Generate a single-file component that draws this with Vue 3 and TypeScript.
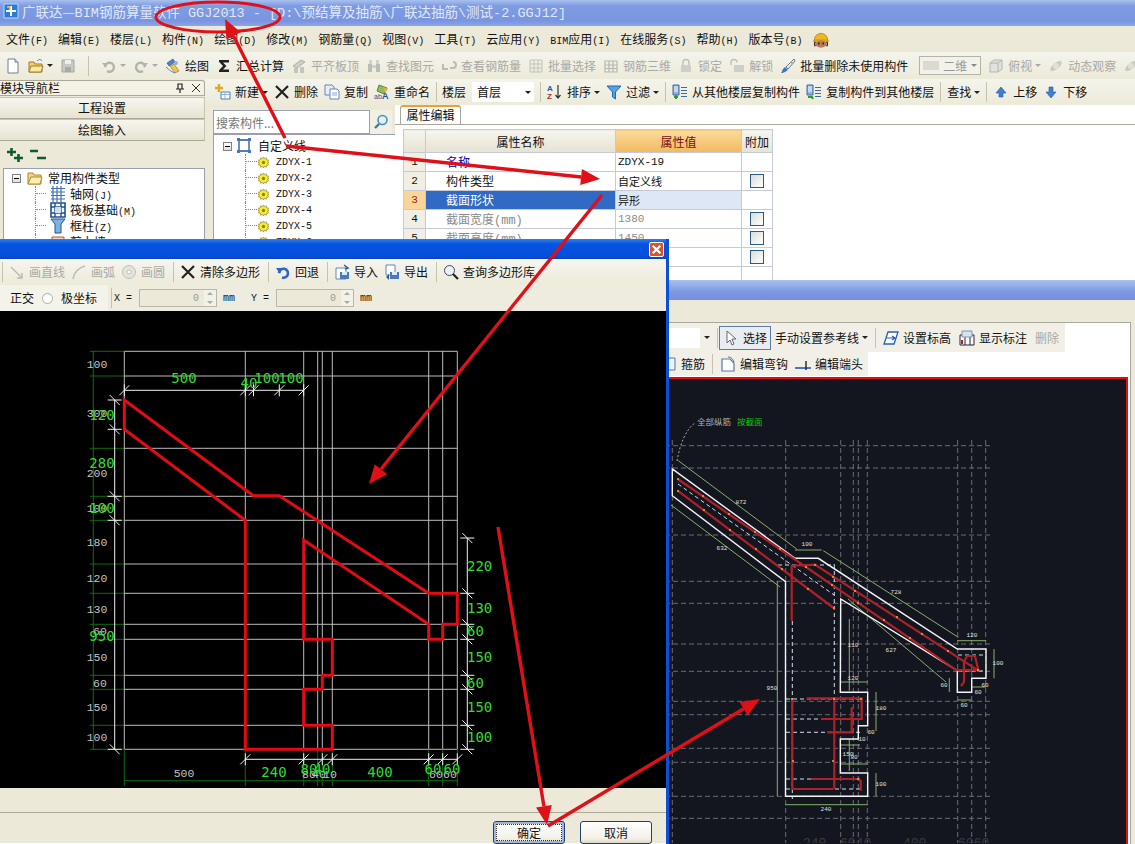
<script setup lang="ts">
interface Tool {
  icon?: string
  text?: string
  off?: boolean
  caret?: boolean
  sep?: boolean
  active?: boolean
}

const icons: Record<string, string> = {
  doc: '<path d="M3 1h7l3 3v11H3z" fill="#fff" stroke="#6d7f9a"/><path d="M10 1v3h3" fill="#dde4ef" stroke="#6d7f9a"/>',
  open: '<path d="M1 4h5l1 2h7v8H1z" fill="#f3cf6a" stroke="#a37c24"/><path d="M3 8h12l-2 6H1z" fill="#fbe9a6" stroke="#a37c24"/><path d="M9 3c2-2 4-2 5 0" fill="none" stroke="#4a7ac0"/>',
  save: '<path d="M2 2h12v12H2z" fill="#c9c9c4" stroke="#a5a5a0"/><path d="M5 2h6v4H5z" fill="#eee"/><path d="M5 9h6v5H5z" fill="#aaa"/>',
  undo: '<path d="M4 9a4.5 4.5 0 1 1 2 4" fill="none" stroke="#b4b4ae" stroke-width="2.4"/><path d="M1 5l5 0-1 5z" fill="#b4b4ae"/>',
  redo: '<path d="M12 9a4.5 4.5 0 1 0-2 4" fill="none" stroke="#b4b4ae" stroke-width="2.4"/><path d="M15 5l-5 0 1 5z" fill="#b4b4ae"/>',
  draw: '<path d="M2 5l6-4 2 3-6 4z" fill="#4d82c8" stroke="#234f8d" stroke-width=".6"/><path d="M5 8l5 7 4-2-5-7z" fill="#e9c65a" stroke="#8a6d1d" stroke-width=".6"/><path d="M1 9c3 3 6 5 9 6" fill="none" stroke="#5c88c4"/><circle cx="11" cy="5" r="2" fill="#8db3e0"/>',
  sigma: '<path d="M3 2h10v2.4H7l3.4 3.6L7 11.600h6V14H3v-1.800L7 8 3 3.800z" fill="#222"/>',
  flush: '<path d="M2 8l8-6 4 2-8 6z" fill="#cfcfca" stroke="#b0b0aa"/><path d="M3 10h4v5H3zM9 9h4v6H9z" fill="#c4c4bf"/>',
  find: '<path d="M2 6h4v8H2zM10 6h4v8h-4z" fill="#bdbdb8"/><path d="M3 2h3v4H3zM10 2h3v4h-3zM6 7h4v3H6z" fill="#d2d2cd"/>',
  hook: '<path d="M2 6v5h5M12 4a3 3 0 0 1 0 6H9" fill="none" stroke="#bbb" stroke-width="2"/>',
  batch: '<path d="M2 2h12v12H2zM2 6h12M2 10h12M6 2v12M10 2v12" fill="none" stroke="#c2c2bc"/>',
  grid3: '<path d="M2 3h12v11H2zM2 7h12M2 10.500h12M6 3v11M10 3v11" fill="none" stroke="#b7b7b1" stroke-width="1.200"/>',
  lock: '<path d="M5 7V4.500a3 3 0 0 1 6 0V7" fill="none" stroke="#bfbfb9" stroke-width="1.400"/><path d="M3 7h10v7H3z" fill="#cfcfc9"/>',
  unlock: '<path d="M2 7V4.500a3 3 0 0 1 6 0" fill="none" stroke="#bfbfb9" stroke-width="1.400"/><path d="M5 7h10v7H5z" fill="#cfcfc9"/>',
  brush: '<path d="M14 1L6 9l2 2 7-8z" fill="#f2f2f2" stroke="#5578b0"/><path d="M5 9l3 3-3 2c-2 1-3 1-4 1 1-1 1-2 2-4z" fill="#3f73c0"/><path d="M11 4l2 2" stroke="#d9a93b" stroke-width="2"/>',
  cube: '<path d="M2 5l4-3h8v9l-4 3H2z" fill="#e2e2dc" stroke="#b4b4ae"/><path d="M2 5h8v9M10 5l4-3" fill="none" stroke="#b4b4ae"/>',
  orbit: '<ellipse cx="8" cy="8" rx="7" ry="3" transform="rotate(-40 8 8)" fill="#c9c9c3"/><circle cx="8" cy="8" r="3" fill="#e0e0da"/>',
  add: '<path d="M6 8h9v7H6z" fill="#fff" stroke="#4d7fb8"/><path d="M6 10.500h9M10 8v7" stroke="#8fb0d6"/><path d="M4 0v8M0 4h8" stroke="#e2a91c" stroke-width="2.400"/>',
  cross: '<path d="M2 2l12 12M14 2L2 14" stroke="#222" stroke-width="2.200"/>',
  copy: '<path d="M1 1h7l2 2v8H1z" fill="#e8eef8" stroke="#6486b8"/><path d="M6 5h7l2 2v8H6z" fill="#fff" stroke="#6486b8"/><path d="M8 9h5M8 11h5" stroke="#8aa6cc"/>',
  rename: '<path d="M5 1l8 3-3 6-7-3z" fill="#8fb95a" stroke="#5f8a31"/><path d="M9 3l5 2-3 4" fill="#e2b24a"/><text x="0" y="15" font-size="7" fill="#284f94" font-family="Liberation Sans">ab</text><text x="8" y="15" font-size="9" font-weight="700" fill="#284f94" font-family="Liberation Sans">A</text>',
  sortaz: '<text x="0" y="7" font-size="8" font-weight="700" fill="#2a5aa8" font-family="Liberation Sans">A</text><text x="0" y="15" font-size="8" font-weight="700" fill="#b03020" font-family="Liberation Sans">Z</text><path d="M11 1v13M8.500 11l2.500 3 2.500-3" fill="none" stroke="#333" stroke-width="1.200"/>',
  filter: '<path d="M1 2h14L9.500 8v7l-3-2V8z" fill="#55a0e6" stroke="#2465a8"/>',
  fromfloor: '<path d="M1 1h6v10H1z" fill="#8bb0de" stroke="#3d6aa6"/><path d="M2 3h4M2 5h4M2 7h4" stroke="#fff"/><path d="M9 3h6v1H9zM9 6h6v1H9zM9 9h6v1H9zM9 12h6v1H9z" fill="#3d6aa6"/><path d="M4 11v4M2 13h4" stroke="#2f9a32" stroke-width="2"/>',
  tofloor: '<path d="M1 1h6v10H1z" fill="#8bb0de" stroke="#3d6aa6"/><path d="M2 3h4M2 5h4M2 7h4" stroke="#fff"/><path d="M9 3h6v1H9zM9 6h6v1H9zM9 9h6v1H9zM9 12h6v1H9z" fill="#3d6aa6"/><path d="M2 13h4l1 2" fill="none" stroke="#2f9a32" stroke-width="2"/>',
  up: '<path d="M8 3l5 6h-3v4H6V9H3z" fill="#3f7fd0" stroke="#1f5aa6" stroke-width=".6"/>',
  down: '<path d="M8 14l5-6h-3V3H6v5H3z" fill="#3f7fd0" stroke="#1f5aa6" stroke-width=".6"/>',
  line: '<path d="M2 3l11 11M13 9v5H8" fill="none" stroke="#b9b9b3" stroke-width="1.400"/>',
  arc: '<path d="M2 15C3 8 7 4 14 2" fill="none" stroke="#bdbdb7" stroke-width="1.600"/>',
  circle: '<circle cx="8" cy="8" r="6.500" fill="#e4e4de" stroke="#c0c0ba"/><circle cx="8" cy="8" r="2" fill="#fff" stroke="#c0c0ba"/>',
  back: '<path d="M4 9a4.500 4.500 0 1 1 3 4.500" fill="none" stroke="#2e66c4" stroke-width="2.600"/><path d="M1 4h6l-2 6z" fill="#2e66c4"/>',
  importfile: '<path d="M2 4h10v11H2z" fill="#fff" stroke="#6486b8"/><path d="M6 8h9v7H6z" fill="#4a79bd"/><path d="M8 8h5v3H8z" fill="#dfe9f7"/><path d="M10 1l4 3-3 1" fill="none" stroke="#35578c" stroke-width="1.400"/>',
  exportfile: '<path d="M2 1h9v10H2z" fill="#fff" stroke="#6486b8"/><path d="M6 8h9v7H6z" fill="#4a79bd"/><path d="M8 8h5v3H8z" fill="#dfe9f7"/><path d="M2 13l3-3v6z" fill="#35578c"/>',
  search: '<circle cx="6.500" cy="6.500" r="5" fill="#e9f2fb" stroke="#445"/><path d="M10 10l5 5" stroke="#222" stroke-width="2.200"/>',
  pointer: '<path d="M4 1v12l3-3 2 5 2-1-2-5h4z" fill="#fff" stroke="#667"/>',
  level: '<path d="M5 2h10l-4 12H1z" fill="#fff" stroke="#2a5fb0" stroke-width="1.300"/><path d="M3 8h9M9 6l3 2-3 2" fill="none" stroke="#2a5fb0" stroke-width="1.200"/>',
  mark: '<path d="M1 5h14v10H1z" fill="#fff" stroke="#223"/><path d="M6 5v10M11 5v10" stroke="#223"/><path d="M3 1h10v6H3z" fill="#d8e2ef" stroke="#7f92ad"/><path d="M2 10h2v4H2z" fill="#b02020"/>',
  rebarbox: '<path d="M2 2h12v12H2z" fill="#eef3fa" stroke="#4d78b4"/>',
  hookedit: '<path d="M2 3h8l4 4v8H2z" fill="#fff" stroke="#5579ad" stroke-width="1.200"/><path d="M8 1c3 0 5 2 6 5" fill="none" stroke="#5579ad"/>',
  endedit: '<path d="M0 12h16" stroke="#3a6db8" stroke-width="1.800"/><path d="M11 5v9" stroke="#223" stroke-width="1.400"/>',
  expand: '<path d="M4.500 1v8M0 5h9" stroke="#0f5a35" stroke-width="2.600"/><path d="M11.500 7v8M7 11h9" stroke="#0f5a35" stroke-width="2.600"/>',
  collapse: '<path d="M0 4h8M7 11h9" stroke="#0f5a35" stroke-width="2.400"/>',
  folder: '<path d="M1 3h5l1 2h7v9H1z" fill="#f4d57a" stroke="#ad8a30"/><path d="M4 7h11l-2 7H1z" fill="#fbedb8" stroke="#ad8a30"/>',
  axis: '<path d="M1 2.500h14M1 6h14M1 9.500h14M1 13h14M3 0v16M7 0v16M11 0v16" stroke="#3c6fb5" stroke-width="1.200"/>',
  raft: '<path d="M1 1h14v14H1z" fill="#fff" stroke="#23508f" stroke-width="1.600"/><path d="M1 5h14M1 11h14M5 1v14M11 1v14" stroke="#23508f" stroke-width="1.400"/><path d="M5 5h6v6H5z" fill="#cfe0f4"/>',
  column: '<path d="M1 1h14l-4 5v9H5V6z" fill="#7fb2e4" stroke="#25578f"/>',
  wall: '<path d="M2 3h12v10H2z" fill="#f0d9c0" stroke="#a06040"/>',
  shape: '<path d="M3 2h10v11H3z" fill="none" stroke="#25549a" stroke-width="1.300"/><path d="M1 0h3v3H1zM12 0h3v3h-3zM1 12h3v3H1zM12 12h3v3h-3z" fill="#3f78c8"/>',
  gear: '<path d="M8 0l1.500 2.500L12 1l.5 3 3 .5L14 7l2 1-2 1 1.500 2.500-3 .5-.5 3-2.500-1.500L8 16l-1.500-2.500L4 15l-.5-3-3-.5L2 9 0 8l2-1L.5 4.500l3-.5L4 1l2.500 1.500z" fill="#f7ee2e" stroke="#5c5a12" stroke-width=".7"/><circle cx="8" cy="8" r="2.400" fill="#8a8620"/>',
  helmet: '<path d="M2 9a6 6 0 0 1 12 0z" fill="#efb821" stroke="#9a7308" stroke-width=".6"/><path d="M1 9h14v1.500H1z" fill="#d89f10"/><ellipse cx="8" cy="12.500" rx="5" ry="3.200" fill="#b77a55"/><circle cx="6" cy="12" r=".8" fill="#222"/><circle cx="10" cy="12" r=".8" fill="#222"/><path d="M3 10.500c-1 1-1 3 0 4M13 10.500c1 1 1 3 0 4" stroke="#3a2415" stroke-width="1.200" fill="none"/>',
  logo: '<path d="M1 1h14v14H1z" fill="#2a7bd6" stroke="#bcd8f6"/><path d="M8 3v10M3 8h10" stroke="#fff" stroke-width="2"/><path d="M4 4h3v3" fill="none" stroke="#ffc24a" stroke-width="1.400"/>',
}

const menus = [
  { label: '文件', key: 'F' }, { label: '编辑', key: 'E' }, { label: '楼层', key: 'L' }, { label: '构件', key: 'N' },
  { label: '绘图', key: 'D' }, { label: '修改', key: 'M' }, { label: '钢筋量', key: 'Q' }, { label: '视图', key: 'V' },
  { label: '工具', key: 'T' }, { label: '云应用', key: 'Y' }, { prefix: 'BIM', label: '应用', key: 'I' },
  { label: '在线服务', key: 'S' }, { label: '帮助', key: 'H' }, { label: '版本号', key: 'B' },
]

const mainTools: Tool[] = [
  { icon: 'doc' }, { icon: 'open', caret: true }, { icon: 'save', off: true }, { sep: true },
  { icon: 'undo', caret: true, off: true }, { icon: 'redo', caret: true, off: true },
  { icon: 'draw', text: '绘图' }, { icon: 'sigma', text: '汇总计算' },
  { icon: 'flush', text: '平齐板顶', off: true }, { icon: 'find', text: '查找图元', off: true },
  { icon: 'hook', text: '查看钢筋量', off: true }, { icon: 'batch', text: '批量选择', off: true },
  { icon: 'grid3', text: '钢筋三维', off: true }, { icon: 'lock', text: '锁定', off: true },
  { icon: 'unlock', text: '解锁', off: true }, { icon: 'brush', text: '批量删除未使用构件' },
]
const viewTools: Tool[] = [
  { icon: 'cube', text: '俯视', caret: true, off: true }, { icon: 'orbit', text: '动态观察', off: true }, { icon: 'orbit', off: true },
]

const listTools: Tool[] = [
  { icon: 'add', text: '新建', caret: true }, { icon: 'cross', text: '删除' },
  { icon: 'copy', text: '复制' }, { icon: 'rename', text: '重命名' }, { sep: true },
]
const sortTools: Tool[] = [
  { sep: true }, { icon: 'sortaz', text: '排序', caret: true }, { icon: 'filter', text: '过滤', caret: true }, { sep: true },
  { icon: 'fromfloor', text: '从其他楼层复制构件' }, { icon: 'tofloor', text: '复制构件到其他楼层' }, { sep: true },
  { text: '查找', caret: true }, { sep: true }, { icon: 'up', text: '上移' }, { icon: 'down', text: '下移' },
]

const navTree = [
  { icon: 'axis', label: '轴网', key: '(J)' },
  { icon: 'raft', label: '筏板基础', key: '(M)' },
  { icon: 'column', label: '框柱', key: '(Z)' },
  { icon: 'wall', label: '剪力墙', key: '(Q)' },
]
const components = ['ZDYX-1', 'ZDYX-2', 'ZDYX-3', 'ZDYX-4', 'ZDYX-5', 'ZDYX-6']

const props = [
  { no: 1, name: '名称', value: 'ZDYX-19', kind: 'link', check: false },
  { no: 2, name: '构件类型', value: '自定义线', kind: '', check: true },
  { no: 3, name: '截面形状', value: '异形', kind: 'selected', check: false },
  { no: 4, name: '截面宽度(mm)', value: '1380', kind: 'muted', check: true },
  { no: 5, name: '截面高度(mm)', value: '1450', kind: 'muted', check: true },
  { no: 6, name: '轴线距左边线距离', value: '(690)', kind: 'muted', check: true },
  { no: 7, name: '', value: '', kind: '', check: false },
]

const polygonTools: Tool[] = [
  { sep: true }, { icon: 'line', text: '画直线', off: true }, { icon: 'arc', text: '画弧', off: true },
  { icon: 'circle', text: '画圆', off: true }, { sep: true }, { icon: 'cross', text: '清除多边形' }, { sep: true },
  { icon: 'back', text: '回退' }, { sep: true }, { icon: 'importfile', text: '导入' }, { icon: 'exportfile', text: '导出' },
  { sep: true }, { icon: 'search', text: '查询多边形库' },
]

const rebarToolsA: Tool[] = [
  { sep: true }, { icon: 'pointer', text: '选择', active: true }, { text: '手动设置参考线', caret: true }, { sep: true },
  { icon: 'level', text: '设置标高' }, { icon: 'mark', text: '显示标注' }, { text: '删除', off: true },
]
const rebarToolsB: Tool[] = [
  { icon: 'rebarbox', text: '箍筋' }, { sep: true }, { icon: 'hookedit', text: '编辑弯钩' }, { icon: 'endedit', text: '编辑端头' },
]

// 多边形编辑窗口的网格和标注，坐标直接用屏幕像素
const gridX = [124.3, 245.3, 303.7, 317.7, 322.3, 332.3, 428.7, 442.7, 457.3]
const gridY = [351.3, 376, 448.3, 496.3, 520.3, 564, 593.3, 624.3, 639.3, 675.3, 689.3, 725.3, 749.3]

const outline = '124.300,400 124.300,429.300 245.300,520.300 245.300,749.300 332.300,749.300 332.300,725.300 303.700,725.300 303.700,689.300 322.300,689.300 322.300,675.300 332.300,675.300 332.300,639.300 303.700,639.300 303.700,540 428.700,624.300 428.700,639.300 442.700,639.300 442.700,624.300 457.300,624.300 457.300,593.300 428.700,593.300 279.300,495.700 253.300,495.700'

const topTicks = [124.3, 245.3, 253.5, 279.3, 303.7]
const leftTicks = [400, 429.3, 496.3, 520.3, 749.3]
const rightTicks = [538, 593.3, 624.3, 639.3, 675.3, 689.3, 725.3, 749.3]
const bottomTicks = [245.3, 303.7, 322.3, 332.3, 428.7, 442.7, 457.3]

const grayLabels = [
  [97, 368, '100'], [97, 417, '300'], [97, 477, '200'], [97, 512, '100'], [97, 546, '180'], [97, 582, '120'],
  [97, 613, '130'], [100, 635, '60'], [97, 661, '150'], [100, 687, '60'], [97, 711, '150'], [97, 741, '100'],
  [184, 777, '500'], [309, 778, '80'], [319, 778, '40'], [330, 778, '10'], [436, 778, '60'], [450, 778, '60'],
] as const
const greenLabels = [
  [184, 383, '500'], [249, 388, '40'], [267, 383, '100'], [291, 383, '100'], [102, 420, '120'], [102, 468, '280'],
  [102, 513, '100'], [102, 641, '950'], [274, 777, '240'], [309, 774, '80'], [322, 774, '40'], [380, 777, '400'],
  [433, 774, '60'], [452, 774, '60'],
] as const
const rightLabels = [
  [571, '220'], [613, '130'], [636, '60'], [662, '150'], [688, '60'], [712, '150'], [742, '100'],
] as const

// 钢筋预览窗口
const dashY = [446.7, 469, 536, 582.3, 604.3, 645, 672.3, 702.3, 715.7, 749.3, 763.3, 797.3, 819.3]
const dashX = [672.3, 785.7, 840.7, 853.3, 858.3, 867.3, 957.7, 971.7, 985.7]

const sectionOutline = '672.300,470 672.300,496.700 785.500,582.700 785.500,797.300 867.700,797.300 867.700,774 840.300,774 840.300,740 858.300,740 858.300,726.700 867.700,726.700 867.700,693.300 840.300,693.300 840.700,600 957.300,671.700 957.300,693.300 971.700,693.300 971.700,679.300 986,679.300 986,650 957.300,650 818.300,559.300 795,559.300'

const dimLines = [
  'M678.300 461.700L796.700 550', 'M823.300 551.700L958.300 638.300', 'M671 506L780 588', 'M848 600L946 683',
  'M777.300 582V797.500', 'M785 805.700H867.700', 'M876 693V732', 'M876 774V797', 'M849.300 620V691.700',
  'M840 683H867.700', 'M957.300 641.700H986', 'M994 650V679.300', 'M957.300 701H971.700', 'M949.300 679V693',
  'M971.700 688H986', 'M795 551H821.700', 'M840 746H860', 'M840 765H867.700', 'M849.300 740V772',
]
const rebarLines = [
  'M677.700 480L956 671H978.300L975 657H967L964 663V683L961 687',
  'M677.700 491.700L835 610',
  'M791.700 621.700V566.700L815 565.700L978.300 671.700',
  'M806.700 699.300H861.700V720H821',
  'M851.700 708.300V733.300H827.300',
  'M792.300 700V790H833.300',
  'M834.300 699.300V790',
  'M811 780H858.300L860.700 781.700V791.700',
]
const innerDash = [
  'M678 485L834 596', 'M792.300 622V800', 'M834.300 565V700', 'M778 566H834', 'M786 700H860', 'M786 720H860',
  'M786 733.300H860', 'M786 780H860', 'M786 790H860', 'M958 656H984', 'M958 672H984',
]
const rebarDots = [
  [678, 480], [703, 497], [729, 515], [755, 533], [780, 550], [806, 568], [832, 586], [858, 604], [884, 621], [910, 639],
  [678, 492], [704, 511], [730, 531], [756, 550], [782, 570], [808, 590], [834, 609], [815, 566], [833, 578], [855, 592],
  [897, 618], [922, 635], [948, 652], [978, 671], [792, 700], [861, 700], [834, 700], [793, 762], [833, 762], [858, 780],
]
const sectionLabels = [
  [741, 505, '872'], [807, 547, '100'], [722, 551, '632'], [896, 595, '728'], [972, 638, '120'], [772, 691, '950'],
  [853, 648, '110'], [853, 681, '120'], [891, 653, '627'], [998, 666, '100'], [944, 688, '60'], [985, 688, '60'],
  [978, 695, '60'], [964, 708, '60'], [881, 711, '180'], [871, 735, '60'], [862, 742, '10'], [848, 757, '150'],
  [854, 760, '80'], [881, 787, '100'], [826, 812, '240'],
] as const

const arrow = (x1: number, y1: number, x2: number, y2: number, size = 19) => {
  const len = Math.hypot(x2 - x1, y2 - y1)
  const ux = (x2 - x1) / len
  const uy = (y2 - y1) / len
  const bx = x2 - ux * size
  const by = y2 - uy * size
  const hw = size * 0.42
  return {
    line: `M${x1} ${y1}L${bx} ${by}`,
    head: `${x2},${y2} ${bx - uy * hw},${by + ux * hw} ${bx + uy * hw},${by - ux * hw}`,
  }
}
const arrows = [
  arrow(285, 138, 225, 19),
  arrow(286, 146, 600, 179),
  arrow(602, 195, 369, 484),
  arrow(498, 527, 547, 825),
  arrow(548, 826, 760, 699),
]
</script>

<template>
  <div class="desktop">
    <div class="main-window">
      <header class="titlebar">
        <svg class="ico" viewBox="0 0 16 16" v-html="icons.logo"></svg>
        <span class="title-text"><span class="cjk">广联达—</span>BIM钢筋算量软件 GGJ2013  - [D:\预结算及抽筋\广联达抽筋\测试-2.GGJ12]</span>
      </header>

      <nav class="menubar">
        <span v-for="m in menus" :key="m.key" class="menu-item"><span v-if="m.prefix" class="hotkey">{{ m.prefix }}</span>{{ m.label }}<span class="hotkey">({{ m.key }})</span></span>
        <svg class="helmet" viewBox="0 0 16 16" v-html="icons.helmet"></svg>
      </nav>

      <div class="toolbar main-tools">
        <template v-for="(t, i) in mainTools" :key="i">
          <i v-if="t.sep" class="sep"></i>
          <span v-else class="tool" :class="{ off: t.off }">
            <svg v-if="t.icon" class="ico" viewBox="0 0 16 16" v-html="icons[t.icon]"></svg>
            <span v-if="t.text">{{ t.text }}</span>
            <i v-if="t.caret" class="caret"></i>
          </span>
        </template>
        <span class="view-combo"><span class="view-swatch"></span>二维<i class="caret"></i></span>
        <template v-for="(t, i) in viewTools" :key="i">
          <span class="tool" :class="{ off: t.off }">
            <svg class="ico" viewBox="0 0 16 16" v-html="icons[t.icon!]"></svg>
            <span v-if="t.text">{{ t.text }}</span>
            <i v-if="t.caret" class="caret"></i>
          </span>
        </template>
      </div>

      <div class="workspace">
        <aside class="nav-panel">
          <div class="nav-head">
            <span>模块导航栏</span>
            <span class="nav-pin">
              <svg viewBox="0 0 10 10"><path d="M3 1h4v5H3zM1 6h8M5 6v4" fill="none" stroke="#222" stroke-width="1.200" /></svg>
              <svg viewBox="0 0 10 10"><path d="M1 1l8 8M9 1L1 9" stroke="#333" /></svg>
            </span>
          </div>
          <button class="nav-btn">工程设置</button>
          <button class="nav-btn">绘图输入</button>
          <div class="nav-expand">
            <svg class="ico" viewBox="0 0 16 16" v-html="icons.expand"></svg>
            <svg class="ico" viewBox="0 0 16 16" v-html="icons.collapse"></svg>
          </div>
          <div class="nav-tree">
            <div class="tree-root">
              <i class="tree-toggle"></i>
              <svg class="ico" viewBox="0 0 16 16" v-html="icons.folder"></svg>
              <span>常用构件类型</span>
            </div>
            <div v-for="n in navTree" :key="n.label" class="tree-leaf">
              <i class="tree-dots"></i>
              <svg class="ico" viewBox="0 0 16 16" v-html="icons[n.icon]"></svg>
              <span>{{ n.label }}<span class="latin">{{ n.key }}</span></span>
            </div>
          </div>
        </aside>

        <div class="content">
          <div class="toolbar list-tools">
            <template v-for="(t, i) in listTools" :key="i">
              <i v-if="t.sep" class="sep"></i>
              <span v-else class="tool">
                <svg class="ico" viewBox="0 0 16 16" v-html="icons[t.icon!]"></svg>
                <span>{{ t.text }}</span>
                <i v-if="t.caret" class="caret"></i>
              </span>
            </template>
            <span class="floor-label">楼层</span>
            <span class="floor-combo">首层<i class="caret"></i></span>
            <template v-for="(t, i) in sortTools" :key="'s' + i">
              <i v-if="t.sep" class="sep"></i>
              <span v-else class="tool">
                <svg v-if="t.icon" class="ico" viewBox="0 0 16 16" v-html="icons[t.icon]"></svg>
                <span>{{ t.text }}</span>
                <i v-if="t.caret" class="caret"></i>
              </span>
            </template>
          </div>

          <div class="content-body">
            <section class="component-list">
              <div class="search-row">
                <span class="search-box">搜索构件...</span>
                <span class="search-btn"><svg class="ico" viewBox="0 0 16 16"><circle cx="9.500" cy="6" r="4.500" fill="#e2f0f8" stroke="#4a90b8" stroke-width="1.600" /><path d="M6 10l-4 4" stroke="#3a7ca5" stroke-width="2.400" /></svg></span>
              </div>
              <div class="component-tree">
                <div class="tree-root wide">
                  <i class="tree-toggle"></i>
                  <svg class="ico" viewBox="0 0 16 16" v-html="icons.shape"></svg>
                  <span>自定义线</span>
                </div>
                <div v-for="c in components" :key="c" class="component-leaf">
                  <i class="tree-dots"></i>
                  <svg class="gear" viewBox="0 0 16 16" v-html="icons.gear"></svg>
                  <span class="latin">{{ c }}</span>
                </div>
              </div>
            </section>

            <section class="property-panel">
              <div class="tab-strip"><span class="tab">属性编辑</span></div>
              <table class="prop-table">
                <colgroup>
                  <col class="col-no" /><col class="col-name" /><col class="col-value" /><col class="col-extra" />
                </colgroup>
                <thead>
                  <tr>
                    <th></th>
                    <th>属性名称</th>
                    <th class="th-value">属性值</th>
                    <th>附加</th>
                  </tr>
                </thead>
                <tbody>
                  <tr v-for="p in props" :key="p.no" :class="p.kind">
                    <td class="no">{{ p.no }}</td>
                    <td class="name">{{ p.name }}</td>
                    <td class="value">{{ p.value }}</td>
                    <td class="extra"><i v-if="p.check" class="check"></i></td>
                  </tr>
                </tbody>
              </table>
            </section>
          </div>
        </div>
      </div>
    </div>

    <!-- 钢筋预览窗口 -->
    <div class="rebar-dialog">
      <div class="rebar-title"></div>
      <div class="rebar-gap"></div>
      <div class="rebar-panel">
        <div class="rebar-row first">
          <span class="rebar-combo"><span class="rebar-combo-box"></span><i class="caret"></i></span>
          <template v-for="(t, i) in rebarToolsA" :key="i">
            <i v-if="t.sep" class="sep"></i>
            <span v-else class="tool" :class="{ off: t.off, active: t.active }">
              <svg v-if="t.icon" class="ico" viewBox="0 0 16 16" v-html="icons[t.icon]"></svg>
              <span>{{ t.text }}</span>
              <i v-if="t.caret" class="caret"></i>
            </span>
          </template>
        </div>
        <div class="rebar-row second">
          <template v-for="(t, i) in rebarToolsB" :key="i">
            <i v-if="t.sep" class="sep"></i>
            <span v-else class="tool">
              <svg class="ico" viewBox="0 0 16 16" v-html="icons[t.icon!]"></svg>
              <span>{{ t.text }}</span>
            </span>
          </template>
        </div>
        <div class="rebar-canvas">
          <svg class="rebar-svg" viewBox="642 380 486 464">
            <path v-for="y in dashY" :key="'h' + y" :d="`M665 ${y}H992`" class="dash" />
            <path v-for="x in dashX" :key="'v' + x" :d="`M${x} 441V844`" class="dash" />
            <path v-for="(d, i) in innerDash" :key="'i' + i" :d="d" class="inner-dash" />
            <path v-for="(d, i) in dimLines" :key="'d' + i" :d="d" class="dim" />
            <polygon :points="sectionOutline" class="section" />
            <path v-for="(d, i) in rebarLines" :key="'r' + i" :d="d" class="bar" />
            <circle v-for="(p, i) in rebarDots" :key="'c' + i" :cx="p[0]" :cy="p[1]" r="0.900" fill="#f2c14a" />
            <path d="M677 462C680 445 686 430 695 424" class="leader" />
            <text x="697" y="426" class="note">全部纵筋</text>
            <text x="737" y="426" class="note green">按截面</text>
            <text v-for="(l, i) in sectionLabels" :key="'t' + i" :x="l[0]" :y="l[1]" class="tiny">{{ l[2] }}</text>
            <text x="803" y="848" class="ghost">240</text>
            <text x="840" y="848" class="ghost">6040</text>
            <text x="903" y="848" class="ghost">400</text>
            <text x="958" y="848" class="ghost">6060</text>
          </svg>
        </div>
      </div>
    </div>

    <!-- 多边形编辑窗口 -->
    <div class="polygon-dialog">
      <div class="dlg-title">
        <span class="dlg-close">
          <svg viewBox="0 0 12 12"><path d="M2.500 2.500l7 7M9.500 2.500l-7 7" stroke="#fff" stroke-width="2" /></svg>
        </span>
      </div>
      <div class="toolbar poly-tools">
        <template v-for="(t, i) in polygonTools" :key="i">
          <i v-if="t.sep" class="sep"></i>
          <span v-else class="tool" :class="{ off: t.off }">
            <svg class="ico" viewBox="0 0 16 16" v-html="icons[t.icon!]"></svg>
            <span>{{ t.text }}</span>
          </span>
        </template>
      </div>
      <div class="coord-row">
        <div class="coord-mode">
          <span>正交</span><i class="radio"></i><span>极坐标</span>
        </div>
        <i class="sep"></i>
        <span class="coord-label">X =</span>
        <span class="spin">0<i class="spin-btns"></i></span>
        <span class="coord-unit">mm</span>
        <span class="coord-label second-coord">Y =</span>
        <span class="spin">0<i class="spin-btns"></i></span>
        <span class="coord-unit">mm</span>
      </div>
      <div class="poly-canvas">
        <svg class="poly-svg" viewBox="0 311 666 477">
          <path v-for="y in gridY" :key="'gy' + y" :d="`M124.300 ${y}H457.300`" class="grid" />
          <path v-for="y in gridY" :key="'ly' + y" :d="`M90 ${y}H124.300`" class="dark-dim" />
          <path v-for="x in gridX" :key="'gx' + x" :d="`M${x} 351.300V749.300`" class="grid" />
          <path v-for="x in gridX" :key="'bx' + x" :d="`M${x} 749.300V786`" class="dark-dim" />
          <path d="M93.300 351V749M124 780.700H457.300" class="dark-dim" />

          <path d="M124.300 390.300H303.700M114.700 400V749.300M467.300 538V749.300M245.300 759.300H457.300" class="white-dim" />
          <path v-for="x in topTicks" :key="'tt' + x" :d="`M${x - 5} ${390.3 + 5}L${x + 5} ${390.3 - 5}M${x} ${390.3 - 6}V${390.3 + 6}`" class="white-dim" />
          <path v-for="y in leftTicks" :key="'lt' + y" :d="`M${114.7 - 7} ${y}H${114.7 + 7}M${114.7 - 5} ${y - 5}L${114.7 + 5} ${y + 5}`" class="white-dim" />
          <path v-for="y in rightTicks" :key="'rt' + y" :d="`M${467.3 - 7} ${y}H${467.3 + 7}M${467.3 - 5} ${y - 5}L${467.3 + 5} ${y + 5}`" class="white-dim" />
          <path v-for="x in bottomTicks" :key="'bt' + x" :d="`M${x - 5} ${759.3 + 5}L${x + 5} ${759.3 - 5}M${x} ${759.3 - 6}V${759.3 + 6}`" class="white-dim" />

          <polygon :points="outline" class="profile" />

          <text v-for="(l, i) in grayLabels" :key="'gl' + i" :x="l[0]" :y="l[1]" class="gray-label">{{ l[2] }}</text>
          <text v-for="(l, i) in greenLabels" :key="'ml' + i" :x="l[0]" :y="l[1]" class="green-label">{{ l[2] }}</text>
          <text v-for="(l, i) in rightLabels" :key="'rl' + i" x="467" :y="l[0]" class="green-label right">{{ l[1] }}</text>
        </svg>
      </div>
      <div class="dlg-footer">
        <button class="xp-btn default">确定</button>
        <button class="xp-btn">取消</button>
      </div>
    </div>

    <!-- 截图上手工画的红色标记 -->
    <svg class="annotations" viewBox="0 0 1135 844">
      <ellipse cx="218" cy="17" rx="62" ry="15" fill="none" stroke="#e01018" stroke-width="3" />
      <g v-for="(a, i) in arrows" :key="i">
        <path :d="a.line" stroke="#e01018" stroke-width="3.400" fill="none" />
        <polygon :points="a.head" fill="#e01018" />
      </g>
    </svg>
  </div>
</template>

<style scoped>
.desktop {
  position: relative;
  width: 1135px;
  height: 844px;
  overflow: hidden;
  background: #ece9d8;
  font: 12px 'Liberation Mono', 'Noto Sans CJK SC', monospace;
  color: #111;
}

.ico {
  width: 16px;
  height: 16px;
  flex: none;
}

.main-window {
  display: flex;
  flex-direction: column;
  height: 100%;
}

.titlebar {
  height: 26px;
  flex: none;
  display: flex;
  align-items: center;
  gap: 3px;
  padding: 0 0 4px 3px;
  box-sizing: border-box;
  background: linear-gradient(#a9c1ee 0, #7f9ce3 22%, #7995e0 80%, #8ba6e6 100%);
  color: #e6ecfa;
}

.title-text {
  font-size: 13.500px;
  white-space: pre;
  opacity: 0.95;
}

.cjk {
  font-family: 'Noto Sans CJK SC', sans-serif;
}

.menubar {
  height: 26px;
  flex: none;
  display: flex;
  align-items: center;
  gap: 10px;
  padding-left: 6px;
  background: #ece9d8;
  white-space: nowrap;
}

.hotkey {
  font-size: 10px;
}

.helmet {
  width: 18px;
  height: 18px;
}

.toolbar {
  display: flex;
  align-items: center;
  white-space: nowrap;
}

.main-tools {
  height: 27px;
  flex: none;
  gap: 7px;
  padding-left: 5px;
  background: linear-gradient(#f5f4ec, #ecead9);
}

.main-tools .sep {
  margin: 0 5px;
}

.tool {
  display: inline-flex;
  align-items: center;
  gap: 4px;
  flex: none;
}

.tool.off {
  color: #a9a9a3;
}

.tool.active {
  padding: 2px 3px;
  border: 1px solid #5b7ba8;
  background: #e9edf2;
}

.caret {
  flex: none;
  width: 0;
  height: 0;
  margin-left: -1px;
  border: 3px solid transparent;
  border-top: 3px solid #222;
  border-bottom: 0;
}

.off .caret {
  border-top-color: #aaa;
}

.sep {
  flex: none;
  width: 1px;
  height: 20px;
  margin: 0 3px;
  background: #c5c2ae;
}

.view-combo {
  flex: none;
  display: flex;
  align-items: center;
  gap: 4px;
  width: 62px;
  height: 19px;
  margin-left: 4px;
  box-sizing: border-box;
  padding: 0 3px;
  border: 1px solid #b5b3a4;
  background: #f3f2ea;
  color: #9a9a95;
}

.view-swatch {
  width: 16px;
  height: 9px;
  background: #dcdad0;
}

.view-combo .caret {
  margin-left: auto;
  border-top-color: #888;
}

.workspace {
  flex: 1;
  display: flex;
  min-height: 0;
}

.nav-panel {
  width: 205px;
  flex: none;
  display: flex;
  flex-direction: column;
  background: #ece9d8;
  padding-top: 1px;
  box-sizing: border-box;
}

.nav-head {
  display: flex;
  justify-content: space-between;
  align-items: center;
  height: 16px;
  border: 1px solid #aca899;
  border-left: 0;
  border-radius: 0 3px 0 0;
  background: #f4f2e6;
  font-size: 12px;
  box-sizing: border-box;
}

.nav-pin {
  display: flex;
  gap: 6px;
  padding-right: 3px;
}

.nav-pin svg {
  width: 10px;
  height: 10px;
}

.nav-btn {
  height: 22px;
  padding: 0;
  border: 1px solid #c8c5b2;
  border-left: 0;
  border-bottom-color: #aca899;
  background: linear-gradient(#f7f6ee, #e6e3d0);
  font: inherit;
  color: #111;
}

.nav-btn:first-of-type {
  margin-top: 1px;
}

.nav-expand {
  display: flex;
  gap: 7px;
  padding: 6px 0 5px 7px;
}

.nav-tree {
  flex: 1;
  margin-left: 3px;
  border: 1px solid #9aa0b0;
  background: #fff;
}

.tree-root {
  display: flex;
  align-items: center;
  height: 16px;
  margin-top: 1px;
  padding: 0 0 0 8px;
  gap: 5px;
}

.tree-toggle {
  width: 9px;
  height: 9px;
  flex: none;
  box-sizing: border-box;
  border: 1px solid #808080;
  background: linear-gradient(#fff, #ddd) no-repeat;
  position: relative;
}

.tree-toggle::after {
  content: '';
  position: absolute;
  left: 1px;
  right: 1px;
  top: 3px;
  height: 1px;
  background: #000;
}

.tree-root .ico {
  margin-left: 1px;
}

.tree-leaf {
  display: flex;
  align-items: center;
  height: 16px;
  margin-left: 31px;
  border-left: 1px dotted #888;
  gap: 4px;
}

.tree-dots {
  width: 10px;
  height: 1px;
  flex: none;
  border-top: 1px dotted #888;
}

.latin {
  font-size: 10px;
}

.content {
  flex: 1;
  min-width: 0;
  display: flex;
  flex-direction: column;
}

.list-tools {
  height: 26px;
  flex: none;
  gap: 6px;
  padding-left: 10px;
  background: linear-gradient(#f5f4ec, #ecead9);
}

.list-tools .sep {
  margin: 0;
}

.floor-label {
  margin-left: -1px;
  flex: none;
}

.floor-combo {
  display: flex;
  align-items: center;
  justify-content: space-between;
  flex: none;
  width: 62px;
  height: 20px;
  padding: 0 3px 0 5px;
  box-sizing: border-box;
  background: #fff;
}

.content-body {
  flex: 1;
  display: flex;
  min-height: 0;
}

.component-list {
  width: 190px;
  flex: none;
  background: #ece9d8;
  padding: 5px 0 0 8px;
  box-sizing: border-box;
}

.search-row {
  display: flex;
  height: 24px;
}

.search-box {
  width: 157px;
  box-sizing: border-box;
  border: 1px solid #9aa0b0;
  background: #fff;
  color: #777;
  padding: 3px 2px;
  font-family: 'Noto Sans CJK SC', sans-serif;
}

.search-btn {
  width: 22px;
  display: flex;
  align-items: center;
  justify-content: center;
  background: #f2f0e4;
}

.component-tree {
  width: 182px;
  height: 160px;
  border: 1px solid #9aa0b0;
  background: #fff;
}

.tree-root.wide {
  margin-top: 3px;
  padding-left: 9px;
  gap: 3px;
}

.tree-root.wide span {
  margin-left: 3px;
}

.component-leaf {
  display: flex;
  align-items: center;
  height: 16px;
  margin-left: 31px;
  border-left: 1px dotted #888;
  gap: 1px;
}

.component-leaf .tree-dots {
  width: 11px;
}

.gear {
  width: 11px;
  height: 11px;
  flex: none;
  margin-right: 6px;
}

.property-panel {
  flex: 1;
  background: #fff;
  padding-top: 0;
}

.tab-strip {
  height: 19px;
  border-bottom: 1px solid #a8a89c;
  padding-left: 5px;
  box-sizing: content-box;
  background: #fff;
}

.tab {
  display: inline-block;
  height: 19px;
  line-height: 20px;
  width: 61px;
  text-align: center;
  box-sizing: border-box;
  border: 1px solid #a8a89c;
  border-top: 2px solid #f0a030;
  border-bottom: 0;
  border-radius: 3px 3px 0 0;
  background: #fff;
}

.prop-table {
  margin: 4px 0 0 8px;
  width: 370px;
  table-layout: fixed;
  border-collapse: collapse;
  font-size: 12px;
}

.col-no {
  width: 22px;
}

.col-name {
  width: 190px;
}

.col-value {
  width: 126px;
}

.col-extra {
  width: 31px;
}

.prop-table th {
  height: 22px;
  padding: 0;
  font-weight: 400;
  border: 1px solid #c6cad4;
  background: linear-gradient(#f6f5ee, #e6e3d3);
  font-family: 'Noto Sans CJK SC', sans-serif;
}

.prop-table th.th-value {
  background: linear-gradient(#fbdc9b, #f2b960);
  color: #7a1010;
}

.prop-table td {
  height: 18px;
  padding: 0;
  border: 1px solid #c6cad4;
  box-sizing: border-box;
}

.prop-table .no {
  text-align: center;
  background: #f1efe3;
  font-size: 11px;
}

.prop-table .name {
  padding-left: 20px;
}

.prop-table .value {
  padding-left: 2px;
  font-size: 11px;
}

.prop-table .extra {
  text-align: center;
}

.prop-table tr.link .name {
  color: #0000c0;
}

.prop-table tr.selected .no {
  background: #fbd697;
  color: #a02020;
}

.prop-table tr.selected .name {
  background: #316ac5;
  color: #fff;
}

.prop-table tr.selected .value {
  background: #dde7f5;
}

.prop-table tr.muted .name,
.prop-table tr.muted .value {
  color: #8a8a8a;
}

.check {
  display: block;
  width: 12px;
  height: 12px;
  margin: 0 auto;
  border: 1px solid #2b5a86;
  background: linear-gradient(135deg, #dcdcd4, #fff);
}

/* 钢筋预览窗口 */
.rebar-dialog {
  position: absolute;
  left: 642px;
  top: 280px;
  right: 0;
  bottom: 0;
  display: flex;
  flex-direction: column;
  background: #ece9d8;
}

.rebar-title {
  height: 20px;
  flex: none;
  background: linear-gradient(#a9c1ee, #7a97e1 60%, #7590df);
}

.rebar-gap {
  height: 22px;
  flex: none;
}

.rebar-panel {
  flex: 1;
  min-height: 0;
  margin-right: 4px;
  border-top: 1px solid #a8a89c;
  border-right: 1px solid #a8a89c;
  background: #fff;
  display: flex;
  flex-direction: column;
}

.rebar-row {
  display: flex;
  align-items: center;
  white-space: nowrap;
  background: #f2f0e6;
  width: max-content;
}

.rebar-row.first {
  height: 29px;
  gap: 4px;
  padding-right: 6px;
}

.rebar-row.first .tool + .tool {
  margin-left: 4px;
}

.rebar-row.first .active + .tool {
  margin-left: 0;
}

.rebar-row.first .sep + .active {
  margin-left: -6px;
}

.rebar-row.second {
  height: 24px;
  margin: 0;
  gap: 4px;
  padding: 0 5px 0 19px;
}

.rebar-row.second .tool + .tool {
  margin-left: 3px;
}

.rebar-combo {
  width: 68px;
  height: 20px;
  display: flex;
  align-items: center;
  gap: 5px;
}

.rebar-combo-box {
  width: 58px;
  height: 100%;
  background: #fff;
}

.rebar-canvas {
  flex: 1;
  min-height: 0;
  margin-top: 1px;
  margin-right: 2px;
  border: solid #e00e10;
  border-width: 2px 2px 0 0;
  background: #14161f;
}

.rebar-svg {
  display: block;
  width: 486px;
  height: 464px;
}

.dash {
  stroke: #7d8188;
  stroke-width: 0.8;
  stroke-dasharray: 5 3;
  fill: none;
}

.inner-dash {
  stroke: #cfe0ee;
  stroke-width: 1;
  stroke-dasharray: 4 3;
  fill: none;
}

.dim {
  stroke: #86b06a;
  stroke-width: 1;
  fill: none;
}

.section {
  fill: none;
  stroke: #f4f4f4;
  stroke-width: 1.400;
}

.bar {
  fill: none;
  stroke: #ae2129;
  stroke-width: 2.200;
}

.leader {
  fill: none;
  stroke: #aaa;
  stroke-dasharray: 2 2;
}

.note {
  font: 8.500px 'Noto Sans CJK SC', sans-serif;
  fill: #b0b0b0;
}

.note.green {
  fill: #0ec40e;
}

.tiny {
  font: 6px 'Liberation Mono', monospace;
  fill: #e0e0d8;
  text-anchor: middle;
}

.ghost {
  font: 13px 'Liberation Mono', monospace;
  fill: #3a3c42;
}

/* 多边形编辑窗口 */
.polygon-dialog {
  position: absolute;
  left: 0;
  top: 239px;
  width: 669px;
  height: 605px;
  box-sizing: border-box;
  border-right: 3px solid #0a4fd8;
  display: flex;
  flex-direction: column;
  background: #ece9d8;
}

.dlg-title {
  height: 20px;
  flex: none;
  display: flex;
  justify-content: flex-end;
  align-items: center;
  padding-right: 2px;
  background: linear-gradient(#2c82ee, #0754e0 25%, #0450dc 80%, #0a44c0);
}

.dlg-close {
  display: flex;
  width: 13px;
  height: 13px;
  border: 1px solid #fff;
  border-radius: 2px;
  background: #d9532f;
}

.poly-tools {
  height: 26px;
  flex: none;
  gap: 6px;
  padding-left: 0;
  background: linear-gradient(#f7f6ef, #ecead9);
}

.poly-tools .sep {
  margin: 0 0 0 2px;
}

.coord-row {
  height: 26px;
  flex: none;
  display: flex;
  align-items: center;
  background: #eeecdf;
}

.coord-mode {
  width: 108px;
  height: 100%;
  box-sizing: border-box;
  display: flex;
  align-items: center;
  gap: 8px;
  padding-left: 10px;
  background: #f4f3ea;
}

.radio {
  width: 11px;
  height: 11px;
  box-sizing: border-box;
  border: 1px solid #b0b0a8;
  border-radius: 50%;
  background: #fff;
}

.coord-row .sep {
  margin: 0 1px 0 3px;
}

.coord-label {
  width: 25px;
  padding-left: 1px;
  font-size: 10px;
}

.second-coord {
  margin-left: 15px;
}

.spin {
  width: 78px;
  height: 18px;
  box-sizing: border-box;
  display: flex;
  align-items: center;
  justify-content: flex-end;
  gap: 5px;
  border: 1px solid #b9b8a8;
  color: #999;
  font-size: 10px;
  background: #ece9d8;
}

.spin-btns {
  width: 12px;
  height: 100%;
  position: relative;
  background: #f3f2e8;
}

.spin-btns::before,
.spin-btns::after {
  content: '';
  position: absolute;
  left: 3px;
  border: 3px solid transparent;
}

.spin-btns::before {
  top: -1px;
  border-bottom-color: #aaa;
}

.spin-btns::after {
  bottom: -1px;
  border-top-color: #aaa;
}

.coord-unit {
  margin-left: 6px;
  font-size: 10px;
}

.poly-canvas {
  height: 477px;
  flex: none;
  background: #000;
}

.poly-svg {
  display: block;
  width: 666px;
  height: 477px;
}

.grid {
  stroke: #bcbcbc;
  stroke-width: 1;
  fill: none;
}

.dark-dim {
  stroke: #0d6d0d;
  stroke-width: 1;
  fill: none;
}

.white-dim {
  stroke: #f2f2f2;
  stroke-width: 1;
  fill: none;
}

.profile {
  fill: none;
  stroke: #e30c14;
  stroke-width: 3;
}

.gray-label {
  font: 11.500px 'Liberation Mono', monospace;
  fill: #c4c4c4;
  text-anchor: middle;
}

.green-label {
  font: 14px 'DejaVu Sans Mono', monospace;
  fill: #31dc31;
  text-anchor: middle;
}

.green-label.right {
  text-anchor: start;
}

.dlg-footer {
  flex: 1;
  display: flex;
  justify-content: flex-end;
  gap: 15px;
  padding: 8px 14px 0 0;
  margin-top: 24px;
  border-top: 1px solid #aca899;
  box-shadow: 0 -1px 0 #fff inset;
}

.xp-btn {
  width: 72px;
  height: 23px;
  padding: 0;
  border: 1px solid #24406e;
  border-radius: 3px;
  background: linear-gradient(#fff, #f2f0e6 80%, #dcd8c8);
  font: 12px 'Noto Sans CJK SC', sans-serif;
  color: #111;
}

.xp-btn.default {
  box-shadow: inset 0 0 0 2px #9db6e0;
  outline: 1px dotted #333;
  outline-offset: -4px;
}

.annotations {
  position: absolute;
  left: 0;
  top: 0;
  width: 1135px;
  height: 844px;
  pointer-events: none;
}
</style>

<style>
html,
body {
  margin: 0;
  overflow: hidden;
  background: #ece9d8;
}
</style>
